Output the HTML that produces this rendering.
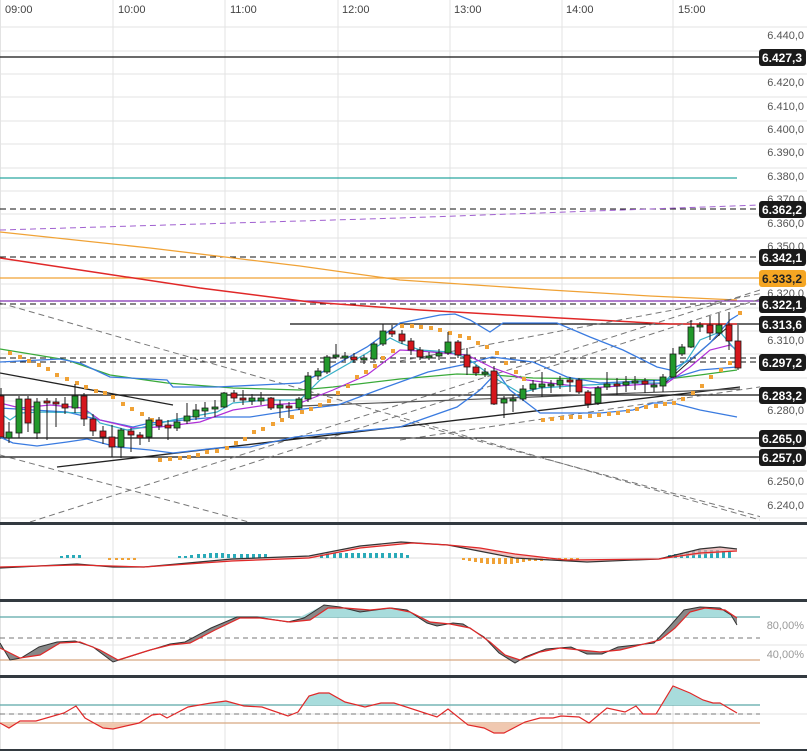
<!DOCTYPE html>
<html><head><meta charset="utf-8"><style>
html,body{margin:0;padding:0;background:#fff;}
svg{display:block;font-family:"Liberation Sans",sans-serif;}
.ax{font-size:11px;fill:#555;text-anchor:end;}
.tm{font-size:11px;fill:#444;}
.lb{font-size:12px;font-weight:bold;fill:#fff;text-anchor:middle;}
.g{stroke:#e3e3e3;stroke-width:1;}
.cg{fill:#22992b;stroke:#1a1a1a;stroke-width:.8;}
.cr{fill:#d5161c;stroke:#1a1a1a;stroke-width:.8;}
.w{stroke:#1a1a1a;stroke-width:1;}
.sar{fill:#f0a236;}
</style></head><body>
<svg width="807" height="751" viewBox="0 0 807 751" xmlns="http://www.w3.org/2000/svg">
<defs>
<clipPath id="main"><rect x="0" y="18" width="760" height="505"/></clipPath>
<clipPath id="stU"><rect x="0" y="600" width="760" height="17"/></clipPath>
<clipPath id="stL"><rect x="0" y="660" width="760" height="16"/></clipPath>
<clipPath id="rsU"><rect x="0" y="676" width="760" height="29"/></clipPath>
<clipPath id="rsL"><rect x="0" y="723" width="760" height="27"/></clipPath>
</defs>
<!-- vertical grid -->
<g class="g">
<line x1="0.5" y1="0" x2="0.5" y2="751"/><line x1="113" y1="0" x2="113" y2="751"/><line x1="225" y1="0" x2="225" y2="751"/><line x1="338" y1="0" x2="338" y2="751"/><line x1="450" y1="0" x2="450" y2="751"/><line x1="562" y1="0" x2="562" y2="751"/><line x1="673" y1="0" x2="673" y2="751"/>
</g>
<!-- horizontal grid main -->
<g class="g">
<line x1="0" y1="27" x2="807" y2="27"/><line x1="0" y1="51" x2="807" y2="51"/><line x1="0" y1="74" x2="807" y2="74"/><line x1="0" y1="97" x2="807" y2="97"/><line x1="0" y1="121" x2="807" y2="121"/><line x1="0" y1="144" x2="807" y2="144"/><line x1="0" y1="168" x2="807" y2="168"/><line x1="0" y1="191" x2="807" y2="191"/><line x1="0" y1="214" x2="807" y2="214"/><line x1="0" y1="238" x2="807" y2="238"/><line x1="0" y1="261" x2="807" y2="261"/><line x1="0" y1="284" x2="807" y2="284"/><line x1="0" y1="308" x2="807" y2="308"/><line x1="0" y1="331" x2="807" y2="331"/><line x1="0" y1="354" x2="807" y2="354"/><line x1="0" y1="378" x2="807" y2="378"/><line x1="0" y1="401" x2="807" y2="401"/><line x1="0" y1="424" x2="807" y2="424"/><line x1="0" y1="448" x2="807" y2="448"/><line x1="0" y1="471" x2="807" y2="471"/><line x1="0" y1="494" x2="807" y2="494"/><line x1="0" y1="518" x2="807" y2="518"/>
<line x1="0" y1="645" x2="807" y2="645"/><line x1="0" y1="714" x2="807" y2="714"/>
</g>
<!-- time labels -->
<g class="tm"><text x="5" y="13">09:00</text><text x="118" y="13">10:00</text><text x="230" y="13">11:00</text><text x="342" y="13">12:00</text><text x="454" y="13">13:00</text><text x="566" y="13">14:00</text><text x="678" y="13">15:00</text></g>
<!-- axis labels -->
<g class="ax"><text x="804" y="39">6.440,0</text><text x="804" y="86">6.420,0</text><text x="804" y="110">6.410,0</text><text x="804" y="133">6.400,0</text><text x="804" y="156">6.390,0</text><text x="804" y="180">6.380,0</text><text x="804" y="203">6.370,0</text><text x="804" y="227">6.360,0</text><text x="804" y="250">6.350,0</text><text x="804" y="297">6.320,0</text><text x="804" y="344">6.310,0</text><text x="804" y="414">6.280,0</text><text x="804" y="485">6.250,0</text><text x="804" y="509">6.240,0</text></g>
<g clip-path="url(#main)">
<!-- horizontal levels -->
<line x1="0" y1="57" x2="760" y2="57" stroke="#111" stroke-width="1.3"/>
<line x1="0" y1="178" x2="737" y2="178" stroke="#2aa6a0" stroke-width="1.2"/>
<line x1="0" y1="209" x2="760" y2="209" stroke="#111" stroke-dasharray="6,4"/>
<polyline points="0,230 400,218 760,205" fill="none" stroke="#a060d0" stroke-dasharray="6,4"/>
<line x1="0" y1="257" x2="760" y2="257" stroke="#111" stroke-dasharray="6,4"/>
<line x1="0" y1="278" x2="760" y2="278" stroke="#f0a236" stroke-width="1.3"/>
<line x1="0" y1="301" x2="760" y2="301" stroke="#8030b0" stroke-width="1.3"/>
<line x1="0" y1="304" x2="760" y2="304" stroke="#111" stroke-dasharray="6,4"/>
<line x1="290" y1="324" x2="760" y2="324" stroke="#111" stroke-width="1.3"/>
<line x1="0" y1="358" x2="760" y2="358" stroke="#111" stroke-dasharray="6,4"/>
<line x1="0" y1="362" x2="760" y2="362" stroke="#111" stroke-dasharray="6,4"/>
<line x1="0" y1="395" x2="760" y2="395" stroke="#111" stroke-width="1.3"/>
<line x1="0" y1="438" x2="760" y2="438" stroke="#111" stroke-width="1.3"/>
<line x1="0" y1="457" x2="760" y2="457" stroke="#111" stroke-width="1.3"/>
<!-- long MAs -->
<polyline points="0,232 150,248 300,266 400,280 550,290 650,296 737,300" fill="none" stroke="#f0a236" stroke-width="1.3"/>
<polyline points="0,258 100,273 200,288 310,302 420,310 560,318 670,324 737,324" fill="none" stroke="#e02828" stroke-width="1.5"/>
<!-- dashed trendlines -->
<g stroke="#777" stroke-dasharray="6,4" fill="none">
<line x1="0" y1="303" x2="760" y2="520"/>
<line x1="0" y1="455" x2="260" y2="525"/>
<line x1="400" y1="420" x2="780" y2="522"/>
<line x1="30" y1="522" x2="760" y2="290"/>
<line x1="230" y1="470" x2="807" y2="284"/>
<line x1="400" y1="361" x2="807" y2="285"/>
<line x1="400" y1="440" x2="807" y2="380"/>
</g>
<!-- solid trendlines -->
<line x1="0" y1="373" x2="173" y2="405" stroke="#222" stroke-width="1.3"/>
<line x1="57" y1="467" x2="740" y2="387" stroke="#222" stroke-width="1.3"/>
<line x1="300" y1="406" x2="740" y2="389" stroke="#555" stroke-width="1.2"/>
<line x1="663" y1="385" x2="730" y2="325" stroke="#222" stroke-width="1"/>
<!-- green MA -->
<polyline points="0,349 67,360 110,375 167,383 233,388 300,390 333,387 400,379 457,374 493,375 533,378 600,379 660,380 700,375 737,370" fill="none" stroke="#3aaa3a" stroke-width="1.3"/>
<!-- bollinger -->
<g fill="none" stroke="#3a7be0" stroke-width="1.3">
<polyline points="0,362 60,359 80,363 110,377 167,380 173,387 217,387 300,383 317,375 367,347 400,323 440,315 455,314 470,320 490,332 503,323 523,323 557,323 590,337 623,350 657,367 670,370 690,360 710,343 730,320 738,315"/>
<polyline points="0,408 33,410 67,412 100,420 133,427 150,423 173,421 217,417 250,417 295,410 338,405 378,390 428,372 462,365 492,357 533,362 567,377 600,383 667,380 700,370 737,367"/>
<polyline points="0,437 13,443 37,446 67,442 87,439 117,447 150,450 173,453 217,448 250,447 295,437 335,433 400,427 457,407 480,390 497,372 510,390 540,413 600,413 633,410 653,403 673,403 700,410 737,417"/>
</g>
<!-- fast EMAs -->
<polyline points="0,403 20,408 50,405 83,408 100,420 133,428 160,427 200,422 233,410 267,405 300,403 333,390 367,375 400,350 420,351 467,355 493,368 527,380 590,388 633,385 667,383 690,367 710,350 730,345 737,350" fill="none" stroke="#b030d8" stroke-width="1.2"/>
<polyline points="0,413 10,420 20,413 43,412 90,413 100,423 127,430 140,428 173,420 217,412 233,403 267,400 300,400 320,380 367,353 390,338 400,343 420,350 450,352 467,358 493,377 520,393 540,388 587,385 633,383 663,383 687,360 700,340 720,332 733,347 737,352" fill="none" stroke="#38b0c8" stroke-width="1.2"/>
<!-- SAR -->
<g class="sar">
<rect x="8" y="351" width="4" height="4"/><rect x="18" y="355" width="4" height="4"/><rect x="27" y="359" width="4" height="4"/><rect x="37" y="363" width="4" height="4"/><rect x="46" y="367" width="4" height="4"/><rect x="55" y="373" width="4" height="4"/><rect x="65" y="377" width="4" height="4"/><rect x="75" y="381" width="4" height="4"/><rect x="84" y="385" width="4" height="4"/><rect x="94" y="389" width="4" height="4"/><rect x="103" y="391" width="4" height="4"/><rect x="111" y="395" width="4" height="4"/><rect x="121" y="402" width="4" height="4"/><rect x="130" y="407" width="4" height="4"/><rect x="140" y="412" width="4" height="4"/><rect x="150" y="418" width="4" height="4"/>
<rect x="158" y="458" width="4" height="4"/><rect x="168" y="457" width="4" height="4"/><rect x="178" y="456" width="4" height="4"/><rect x="187" y="455" width="4" height="4"/><rect x="196" y="453" width="4" height="4"/><rect x="205" y="450" width="4" height="4"/><rect x="215" y="449" width="4" height="4"/><rect x="225" y="446" width="4" height="4"/><rect x="234" y="441" width="4" height="4"/><rect x="243" y="437" width="4" height="4"/><rect x="252" y="430" width="4" height="4"/><rect x="261" y="427" width="4" height="4"/><rect x="271" y="422" width="4" height="4"/><rect x="280" y="418" width="4" height="4"/><rect x="290" y="415" width="4" height="4"/><rect x="300" y="410" width="4" height="4"/><rect x="309" y="407" width="4" height="4"/><rect x="318" y="403" width="4" height="4"/><rect x="327" y="399" width="4" height="4"/><rect x="336" y="391" width="4" height="4"/><rect x="346" y="384" width="4" height="4"/><rect x="355" y="375" width="4" height="4"/><rect x="364" y="370" width="4" height="4"/><rect x="373" y="364" width="4" height="4"/><rect x="381" y="356" width="4" height="4"/><rect x="391" y="349" width="4" height="4"/>
<rect x="400" y="324" width="4" height="4"/><rect x="410" y="324" width="4" height="4"/><rect x="419" y="325" width="4" height="4"/><rect x="429" y="326" width="4" height="4"/><rect x="438" y="328" width="4" height="4"/><rect x="448" y="331" width="4" height="4"/><rect x="458" y="334" width="4" height="4"/><rect x="467" y="336" width="4" height="4"/><rect x="476" y="341" width="4" height="4"/><rect x="485" y="345" width="4" height="4"/><rect x="495" y="351" width="4" height="4"/><rect x="504" y="361" width="4" height="4"/><rect x="514" y="370" width="4" height="4"/><rect x="522" y="377" width="4" height="4"/>
<rect x="541" y="418" width="4" height="4"/><rect x="550" y="417" width="4" height="4"/><rect x="560" y="416" width="4" height="4"/><rect x="569" y="415" width="4" height="4"/><rect x="578" y="415" width="4" height="4"/><rect x="588" y="414" width="4" height="4"/><rect x="597" y="413" width="4" height="4"/><rect x="607" y="412" width="4" height="4"/><rect x="616" y="411" width="4" height="4"/><rect x="626" y="409" width="4" height="4"/><rect x="635" y="407" width="4" height="4"/><rect x="644" y="405" width="4" height="4"/><rect x="654" y="404" width="4" height="4"/><rect x="663" y="402" width="4" height="4"/><rect x="672" y="401" width="4" height="4"/><rect x="681" y="397" width="4" height="4"/><rect x="691" y="391" width="4" height="4"/><rect x="700" y="384" width="4" height="4"/><rect x="709" y="375" width="4" height="4"/><rect x="719" y="368" width="4" height="4"/><rect x="728" y="361" width="4" height="4"/><rect x="738" y="311" width="4" height="4"/>
</g>
<!-- candles wicks -->
<g class="w">
<line x1="1" y1="388" x2="1" y2="437"/><line x1="9" y1="422" x2="9" y2="443"/><line x1="19" y1="396" x2="19" y2="438"/><line x1="28" y1="396" x2="28" y2="432"/><line x1="37" y1="398" x2="37" y2="439"/><line x1="47" y1="398" x2="47" y2="440"/><line x1="56" y1="398" x2="56" y2="427"/><line x1="65" y1="397" x2="65" y2="414"/><line x1="75" y1="384" x2="75" y2="413"/><line x1="84" y1="393" x2="84" y2="426"/><line x1="93" y1="414" x2="93" y2="436"/><line x1="103" y1="426" x2="103" y2="444"/><line x1="112" y1="425" x2="112" y2="457"/><line x1="121" y1="428" x2="121" y2="458"/><line x1="131" y1="428" x2="131" y2="452"/><line x1="140" y1="432" x2="140" y2="445"/><line x1="149" y1="417" x2="149" y2="442"/><line x1="159" y1="417" x2="159" y2="430"/><line x1="168" y1="420" x2="168" y2="440"/><line x1="177" y1="413" x2="177" y2="431"/><line x1="187" y1="403" x2="187" y2="424"/><line x1="196" y1="404" x2="196" y2="420"/><line x1="205" y1="402" x2="205" y2="417"/><line x1="215" y1="400" x2="215" y2="417"/><line x1="224" y1="392" x2="224" y2="408"/><line x1="234" y1="390" x2="234" y2="402"/><line x1="243" y1="390" x2="243" y2="405"/><line x1="252" y1="394" x2="252" y2="405"/><line x1="261" y1="392" x2="261" y2="405"/><line x1="271" y1="397" x2="271" y2="410"/><line x1="280" y1="400" x2="280" y2="418"/><line x1="289" y1="402" x2="289" y2="418"/><line x1="299" y1="397" x2="299" y2="410"/><line x1="308" y1="372" x2="308" y2="402"/><line x1="318" y1="368" x2="318" y2="380"/><line x1="327" y1="355" x2="327" y2="374"/><line x1="336" y1="344" x2="336" y2="359"/><line x1="345" y1="352" x2="345" y2="361"/><line x1="354" y1="353" x2="354" y2="363"/><line x1="364" y1="355" x2="364" y2="364"/><line x1="374" y1="342" x2="374" y2="361"/><line x1="383" y1="324" x2="383" y2="346"/><line x1="392" y1="325" x2="392" y2="337"/><line x1="402" y1="330" x2="402" y2="344"/><line x1="411" y1="338" x2="411" y2="355"/><line x1="420" y1="347" x2="420" y2="360"/><line x1="429" y1="352" x2="429" y2="360"/><line x1="439" y1="349" x2="439" y2="360"/><line x1="448" y1="332" x2="448" y2="355"/><line x1="458" y1="340" x2="458" y2="358"/><line x1="467" y1="348" x2="467" y2="375"/><line x1="476" y1="365" x2="476" y2="376"/><line x1="485" y1="368" x2="485" y2="377"/><line x1="494" y1="366" x2="494" y2="405"/><line x1="504" y1="396" x2="504" y2="418"/><line x1="513" y1="395" x2="513" y2="412"/><line x1="523" y1="385" x2="523" y2="401"/><line x1="533" y1="380" x2="533" y2="392"/><line x1="542" y1="372" x2="542" y2="397"/><line x1="551" y1="380" x2="551" y2="393"/><line x1="560" y1="376" x2="560" y2="389"/><line x1="570" y1="377" x2="570" y2="392"/><line x1="579" y1="378" x2="579" y2="394"/><line x1="588" y1="390" x2="588" y2="408"/><line x1="598" y1="386" x2="598" y2="405"/><line x1="607" y1="372" x2="607" y2="390"/><line x1="617" y1="378" x2="617" y2="395"/><line x1="626" y1="376" x2="626" y2="392"/><line x1="635" y1="376" x2="635" y2="390"/><line x1="645" y1="378" x2="645" y2="393"/><line x1="654" y1="380" x2="654" y2="392"/><line x1="663" y1="374" x2="663" y2="392"/><line x1="673" y1="348" x2="673" y2="378"/><line x1="682" y1="344" x2="682" y2="356"/><line x1="691" y1="320" x2="691" y2="348"/><line x1="700" y1="322" x2="700" y2="332"/><line x1="710" y1="316" x2="710" y2="340"/><line x1="719" y1="313" x2="719" y2="336"/><line x1="729" y1="312" x2="729" y2="350"/><line x1="738" y1="325" x2="738" y2="370"/>
</g>
<!-- candle bodies -->
<g>
<rect class="cr" x="-2" y="396" width="6" height="41"/><rect class="cg" x="6" y="432" width="6" height="6"/><rect class="cg" x="16" y="399" width="6" height="34"/><rect class="cr" x="25" y="399" width="6" height="24"/><rect class="cg" x="34" y="402" width="6" height="31"/><rect class="cr" x="44" y="401" width="6" height="2"/><rect class="cr" x="53" y="402" width="6" height="2"/><rect class="cr" x="62" y="404" width="6" height="4"/><rect class="cg" x="72" y="396" width="6" height="12"/><rect class="cr" x="81" y="396" width="6" height="23"/><rect class="cr" x="90" y="419" width="6" height="12"/><rect class="cr" x="100" y="431" width="6" height="6"/><rect class="cr" x="109" y="437" width="6" height="10"/><rect class="cg" x="118" y="430" width="6" height="17"/><rect class="cr" x="128" y="431" width="6" height="4"/><rect class="cr" x="137" y="435" width="6" height="3"/><rect class="cg" x="146" y="420" width="6" height="17"/><rect class="cr" x="156" y="420" width="6" height="6"/><rect class="cr" x="165" y="425" width="6" height="3"/><rect class="cg" x="174" y="422" width="6" height="6"/><rect class="cg" x="184" y="416" width="6" height="5"/><rect class="cg" x="193" y="410" width="6" height="7"/><rect class="cg" x="202" y="408" width="6" height="3"/><rect class="cg" x="212" y="407" width="6" height="2"/><rect class="cg" x="221" y="393" width="6" height="14"/><rect class="cr" x="231" y="393" width="6" height="5"/><rect class="cr" x="240" y="398" width="6" height="2"/><rect class="cg" x="249" y="398" width="6" height="3"/><rect class="cg" x="258" y="398" width="6" height="3"/><rect class="cr" x="268" y="398" width="6" height="10"/><rect class="cg" x="277" y="405" width="6" height="3"/><rect class="cr" x="286" y="406" width="6" height="2"/><rect class="cg" x="296" y="399" width="6" height="9"/><rect class="cg" x="305" y="376" width="6" height="23"/><rect class="cg" x="315" y="371" width="6" height="5"/><rect class="cg" x="324" y="357" width="6" height="15"/><rect class="cg" x="333" y="355" width="6" height="2"/><rect class="cg" x="342" y="356" width="6" height="2"/><rect class="cr" x="351" y="357" width="6" height="3"/><rect class="cg" x="361" y="358" width="6" height="2"/><rect class="cg" x="371" y="344" width="6" height="15"/><rect class="cg" x="380" y="331" width="6" height="13"/><rect class="cr" x="389" y="331" width="6" height="3"/><rect class="cr" x="399" y="334" width="6" height="7"/><rect class="cr" x="408" y="341" width="6" height="9"/><rect class="cr" x="417" y="350" width="6" height="7"/><rect class="cg" x="426" y="356" width="6" height="2"/><rect class="cg" x="436" y="353" width="6" height="3"/><rect class="cg" x="445" y="342" width="6" height="11"/><rect class="cr" x="455" y="342" width="6" height="13"/><rect class="cr" x="464" y="355" width="6" height="12"/><rect class="cr" x="473" y="367" width="6" height="6"/><rect class="cg" x="482" y="372" width="6" height="2"/><rect class="cr" x="491" y="371" width="6" height="33"/><rect class="cg" x="501" y="399" width="6" height="4"/><rect class="cg" x="510" y="399" width="6" height="2"/><rect class="cg" x="520" y="389" width="6" height="10"/><rect class="cg" x="530" y="384" width="6" height="5"/><rect class="cg" x="539" y="384" width="6" height="3"/><rect class="cg" x="548" y="384" width="6" height="2"/><rect class="cg" x="557" y="380" width="6" height="5"/><rect class="cr" x="567" y="380" width="6" height="2"/><rect class="cr" x="576" y="380" width="6" height="12"/><rect class="cr" x="585" y="392" width="6" height="12"/><rect class="cg" x="595" y="388" width="6" height="15"/><rect class="cg" x="604" y="384" width="6" height="3"/><rect class="cr" x="614" y="384" width="6" height="2"/><rect class="cg" x="623" y="382" width="6" height="3"/><rect class="cg" x="632" y="381" width="6" height="2"/><rect class="cr" x="642" y="381" width="6" height="3"/><rect class="cg" x="651" y="385" width="6" height="2"/><rect class="cg" x="660" y="377" width="6" height="9"/><rect class="cg" x="670" y="354" width="6" height="23"/><rect class="cg" x="679" y="347" width="6" height="7"/><rect class="cg" x="688" y="327" width="6" height="20"/><rect class="cg" x="697" y="325" width="6" height="2"/><rect class="cr" x="707" y="325" width="6" height="8"/><rect class="cg" x="716" y="325" width="6" height="8"/><rect class="cr" x="726" y="325" width="6" height="16"/><rect class="cr" x="735" y="341" width="6" height="27"/>
</g>
</g>
<!-- price labels -->
<g>
<rect x="759" y="49" width="47" height="17" rx="3" fill="#1a1a1a"/><text class="lb" x="782" y="62">6.427,3</text>
<rect x="759" y="201" width="47" height="17" rx="3" fill="#1a1a1a"/><text class="lb" x="782" y="214">6.362,2</text>
<rect x="759" y="249" width="47" height="17" rx="3" fill="#1a1a1a"/><text class="lb" x="782" y="262">6.342,1</text>
<rect x="759" y="270" width="47" height="17" rx="3" fill="#f5a623"/><text class="lb" x="782" y="283" style="fill:#222">6.333,2</text>
<rect x="759" y="296" width="47" height="17" rx="3" fill="#1a1a1a"/><text class="lb" x="782" y="309">6.322,1</text>
<rect x="759" y="316" width="47" height="17" rx="3" fill="#1a1a1a"/><text class="lb" x="782" y="329">6.313,6</text>
<rect x="759" y="354" width="47" height="17" rx="3" fill="#1a1a1a"/><text class="lb" x="782" y="367">6.297,2</text>
<rect x="759" y="387" width="47" height="17" rx="3" fill="#1a1a1a"/><text class="lb" x="782" y="400">6.283,2</text>
<rect x="759" y="430" width="47" height="17" rx="3" fill="#1a1a1a"/><text class="lb" x="782" y="443">6.265,0</text>
<rect x="759" y="449" width="47" height="17" rx="3" fill="#1a1a1a"/><text class="lb" x="782" y="462">6.257,0</text>
</g>
<!-- panel separators -->
<rect x="0" y="522" width="807" height="3" fill="#333a40"/>
<rect x="0" y="599" width="807" height="3" fill="#333a40"/>
<rect x="0" y="675" width="807" height="3" fill="#333a40"/>
<rect x="0" y="749" width="807" height="2" fill="#333a40"/>
<!-- MACD -->
<line x1="0" y1="558" x2="807" y2="558" stroke="#ddd"/>
<g fill="#2aaab8">
<rect x="60" y="556" width="3" height="2"/><rect x="66" y="555" width="3" height="3"/><rect x="72" y="555" width="3" height="3"/><rect x="78" y="555" width="3" height="3"/><rect x="178" y="556" width="3" height="2"/><rect x="184" y="556" width="3" height="2"/><rect x="190" y="555" width="3" height="3"/><rect x="197" y="554" width="3" height="4"/><rect x="203" y="554" width="3" height="4"/><rect x="209" y="553" width="3" height="5"/><rect x="215" y="553" width="3" height="5"/><rect x="221" y="553" width="3" height="5"/><rect x="227" y="554" width="3" height="4"/><rect x="233" y="554" width="3" height="4"/><rect x="240" y="554" width="3" height="4"/><rect x="246" y="554" width="3" height="4"/><rect x="252" y="554" width="3" height="4"/><rect x="258" y="554" width="3" height="4"/><rect x="264" y="554" width="3" height="4"/><rect x="320" y="554" width="3" height="4"/><rect x="326" y="553" width="3" height="5"/><rect x="333" y="553" width="3" height="5"/><rect x="339" y="553" width="3" height="5"/><rect x="345" y="553" width="3" height="5"/><rect x="351" y="553" width="3" height="5"/><rect x="357" y="553" width="3" height="5"/><rect x="363" y="553" width="3" height="5"/><rect x="369" y="553" width="3" height="5"/><rect x="375" y="553" width="3" height="5"/><rect x="381" y="553" width="3" height="5"/><rect x="388" y="553" width="3" height="5"/><rect x="394" y="553" width="3" height="5"/><rect x="400" y="553" width="3" height="5"/><rect x="406" y="555" width="3" height="3"/>
<rect x="668" y="555" width="3" height="3"/><rect x="674" y="554" width="3" height="4"/><rect x="680" y="553" width="3" height="5"/><rect x="686" y="552" width="3" height="6"/><rect x="692" y="551" width="3" height="7"/><rect x="698" y="550" width="3" height="8"/><rect x="704" y="550" width="3" height="8"/><rect x="710" y="550" width="3" height="8"/><rect x="716" y="550" width="3" height="8"/><rect x="722" y="551" width="3" height="7"/><rect x="728" y="552" width="3" height="6"/>
</g>
<g fill="#f0a236">
<rect x="108" y="558" width="3" height="2"/><rect x="115" y="558" width="3" height="2"/><rect x="121" y="558" width="3" height="2"/><rect x="127" y="558" width="3" height="2"/><rect x="133" y="558" width="3" height="2"/><rect x="462" y="558" width="3" height="2"/><rect x="468" y="558" width="3" height="3"/><rect x="474" y="558" width="3" height="4"/><rect x="480" y="558" width="3" height="5"/><rect x="486" y="558" width="3" height="6"/><rect x="492" y="558" width="3" height="6"/><rect x="498" y="558" width="3" height="6"/><rect x="504" y="558" width="3" height="6"/><rect x="510" y="558" width="3" height="6"/><rect x="516" y="558" width="3" height="5"/><rect x="522" y="558" width="3" height="4"/><rect x="528" y="558" width="3" height="3"/><rect x="534" y="558" width="3" height="3"/><rect x="540" y="558" width="3" height="3"/><rect x="546" y="558" width="3" height="2"/><rect x="552" y="558" width="3" height="2"/><rect x="558" y="558" width="3" height="2"/><rect x="564" y="558" width="3" height="2"/><rect x="570" y="558" width="3" height="2"/><rect x="576" y="558" width="3" height="2"/>
</g>
<polygon points="0,568 77,564 113,567 144,567 232,559 309,556 360,546 401,542 448,545 484,552 515,558 587,562 659,559 700,549 720,547 737,549 737,551 659,559 566,560 515,554 480,548 448,545 412,543 360,548 309,558 232,561 144,567 77,565 0,567" fill="#e8a8a8" opacity=".7"/>
<polyline points="0,568 77,564 113,567 144,567 232,559 309,556 360,546 401,542 448,545 484,552 515,558 587,562 659,559 700,549 720,547 737,549" fill="none" stroke="#333" stroke-width="1.2"/>
<polyline points="0,567 77,565 144,567 232,561 309,558 360,548 412,543 448,545 480,548 515,554 566,560 659,559 700,553 737,551" fill="none" stroke="#e02828" stroke-width="1.2"/>
<!-- Stoch -->
<line x1="0" y1="617" x2="760" y2="617" stroke="#5aa8a8" stroke-width="1.2"/>
<line x1="0" y1="638" x2="760" y2="638" stroke="#777" stroke-dasharray="5,4"/>
<line x1="0" y1="660" x2="760" y2="660" stroke="#d8a880" stroke-width="1.2"/>
<text x="804" y="629" class="ax" style="fill:#999">80,00%</text>
<text x="804" y="658" class="ax" style="fill:#999">40,00%</text>
<polygon clip-path="url(#stU)" points="0,617 300,617 324,605 340,607 360,612 391,608 407,610 420,617 660,617 669,627 684,610 700,607 720,608 731,615 737,617" fill="#a8dcdc"/>
<polygon points="0,643 10,660 21,658 39,647 57,642 75,641 93,647 113,662 144,652 170,644 185,642 211,628 237,617 257,617 288,622 304,618 324,605 340,607 360,612 391,608 407,610 427,623 437,626 453,623 463,624 484,637 499,653 515,663 525,657 546,649 571,647 587,654 602,654 618,647 654,643 669,627 684,610 700,607 720,608 731,615 737,625 737,618 725,610 705,608 690,612 675,628 660,640 620,650 600,652 580,650 560,648 540,652 520,660 505,655 490,642 470,628 450,624 430,622 410,612 390,608 370,610 345,608 328,608 310,620 290,622 260,618 240,618 215,630 190,643 170,645 150,650 118,660 100,650 80,642 60,643 40,655 20,658 0,648" fill="#888"/>
<polyline points="0,643 10,660 21,658 39,647 57,642 75,641 93,647 113,662 144,652 170,644 185,642 211,628 237,617 257,617 288,622 304,618 324,605 340,607 360,612 391,608 407,610 427,623 437,626 453,623 463,624 484,637 499,653 515,663 525,657 546,649 571,647 587,654 602,654 618,647 654,643 669,627 684,610 700,607 720,608 731,615 737,625" fill="none" stroke="#333" stroke-width="1"/>
<polyline points="0,648 20,658 40,655 60,643 80,642 100,650 118,660 150,650 170,645 190,643 215,630 240,618 260,618 290,622 310,620 328,608 345,608 370,610 390,608 410,612 430,622 450,624 470,628 490,642 505,655 520,660 540,652 560,648 580,650 600,652 620,650 660,640 675,628 690,612 705,608 725,610 737,618" fill="none" stroke="#e02828" stroke-width="1.2"/>
<!-- RSI -->
<line x1="0" y1="705" x2="760" y2="705" stroke="#5aa8a8" stroke-width="1.2"/>
<line x1="0" y1="714" x2="760" y2="714" stroke="#777" stroke-dasharray="5,4"/>
<line x1="0" y1="723" x2="760" y2="723" stroke="#d8a880" stroke-width="1.2"/>
<polygon clip-path="url(#rsU)" points="0,705 0,723 9,728 20,721 36,721 64,713 76,706 85,718 103,728 113,729 139,723 152,715 160,714 167,718 188,707 211,703 226,701 244,706 262,707 288,716 298,712 309,696 319,693 329,693 345,702 365,707 381,703 394,703 437,717 448,709 468,725 484,728 494,733 504,733 525,722 540,718 553,718 561,716 579,717 589,723 607,708 625,712 636,706 643,714 656,714 673,686 690,693 703,700 713,703 720,703 737,713 737,705" fill="#a8dcdc"/>
<polygon clip-path="url(#rsL)" points="0,723 0,723 9,728 20,721 36,721 64,713 76,706 85,718 103,728 113,729 139,723 152,715 160,714 167,718 188,707 211,703 226,701 244,706 262,707 288,716 298,712 309,696 319,693 329,693 345,702 365,707 381,703 394,703 437,717 448,709 468,725 484,728 494,733 504,733 525,722 540,718 553,718 561,716 579,717 589,723 607,708 625,712 636,706 643,714 656,714 673,686 690,693 703,700 713,703 720,703 737,713 737,723" fill="#f0c8b0"/>
<polyline points="0,723 9,728 20,721 36,721 64,713 76,706 85,718 103,728 113,729 139,723 152,715 160,714 167,718 188,707 211,703 226,701 244,706 262,707 288,716 298,712 309,696 319,693 329,693 345,702 365,707 381,703 394,703 437,717 448,709 468,725 484,728 494,733 504,733 525,722 540,718 553,718 561,716 579,717 589,723 607,708 625,712 636,706 643,714 656,714 673,686 690,693 703,700 713,703 720,703 737,713" fill="none" stroke="#e02828" stroke-width="1.2"/>
</svg>
</body></html>
